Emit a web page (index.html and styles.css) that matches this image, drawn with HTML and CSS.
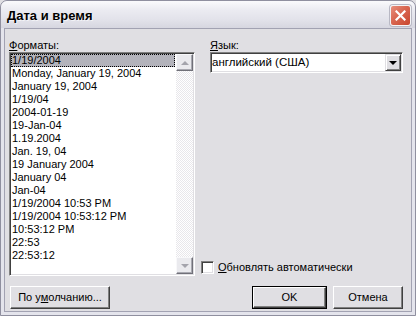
FILE: index.html
```html
<!DOCTYPE html>
<html lang="ru">
<head>
<meta charset="utf-8">
<title>Дата и время</title>
<link rel="stylesheet" href="styles.css">
</head>
<body>
<div class="window">
  <div class="titlebar">
    <span class="title">Дата и время</span>
    <span class="close">
      <svg width="11" height="11" viewBox="0 0 11 11"><path d="M1.5 1.5 L9.5 9.5 M9.5 1.5 L1.5 9.5" stroke="#fff" stroke-width="2.2" stroke-linecap="square" fill="none"/></svg>
    </span>
  </div>
  <div class="client">
    <div class="main">
      <div class="col-left">
        <div class="label"><u>Ф</u>орматы:</div>
        <div class="listbox">
          <ul class="items">
            <li class="selected">1/19/2004</li>
            <li>Monday, January 19, 2004</li>
            <li>January 19, 2004</li>
            <li>1/19/04</li>
            <li>2004-01-19</li>
            <li>19-Jan-04</li>
            <li>1.19.2004</li>
            <li>Jan. 19, 04</li>
            <li>19 January 2004</li>
            <li>January 04</li>
            <li>Jan-04</li>
            <li>1/19/2004 10:53 PM</li>
            <li>1/19/2004 10:53:12 PM</li>
            <li>10:53:12 PM</li>
            <li>22:53</li>
            <li>22:53:12</li>
          </ul>
          <div class="vscroll">
            <div class="sbtn"><span class="tri-up"></span></div>
            <div class="track"></div>
            <div class="sbtn"><span class="tri-down gray"></span></div>
          </div>
        </div>
      </div>
      <div class="col-right">
        <div class="lang">
          <div class="label"><u>Я</u>зык:</div>
          <div class="combo">
            <span class="combo-text">английский (США)</span>
            <span class="combo-btn"><span class="tri-down"></span></span>
          </div>
        </div>
        <div class="check">
          <span class="box"></span>
          <span class="check-text"><u>О</u>бновлять автоматически</span>
        </div>
      </div>
    </div>
    <div class="buttons">
      <div class="btn btn-defaults">По у<u>м</u>олчанию...</div>
      <div class="spacer"></div>
      <div class="btn btn-ok"><span class="btn-ok-inner">OK</span></div>
      <div class="btn btn-cancel">Отмена</div>
    </div>
  </div>
</div>
</body>
</html>
```

FILE: styles.css
```css
html, body {
  margin: 0;
  padding: 0;
  background: #e0dfe3;
}

.window {
  width: 416px;
  height: 316px;
  box-sizing: border-box;
  border: 1px solid #8f8f9f;
  border-radius: 7px 7px 0 0;
  background: #e4e4ec;
  padding: 0 3px 3px 3px;
  display: flex;
  flex-direction: column;
  font-family: "Liberation Sans", Arial, sans-serif;
  font-size: 11px;
  color: #000;
  overflow: hidden;
}

.titlebar {
  height: 27px;
  margin: 0 -3px;
  display: flex;
  align-items: center;
  justify-content: space-between;
  padding: 0 4px 0 6px;
  background: linear-gradient(#fafafc 0%, #ececf2 30%, #e2e2ea 70%, #d6d6e0 100%);
  border-radius: 6px 6px 0 0;
}

.title {
  font-weight: bold;
  font-size: 13px;
  color: #000;
  text-shadow: 1px 1px 0 rgba(255,255,255,0.6);
  padding-top: 1px;
}

.close {
  width: 19px;
  height: 19px;
  border: 1px solid #f4f4f6;
  border-radius: 3px;
  background: linear-gradient(135deg, #e8907e 0%, #da6a55 40%, #c9452d 100%);
  display: flex;
  align-items: center;
  justify-content: center;
  box-shadow: 0 0 0 1px #b8b8c4;
  margin-top: 1px;
}

.client {
  flex: 1;
  background: #e0dfe3;
  border: 1px solid #a2a2b2;
  padding: 10px 8px 2px 4px;
  display: flex;
  flex-direction: column;
}

.main {
  display: flex;
  height: 237px;
}

.label {
  height: 13px;
  line-height: 13px;
}

u {
  text-decoration: underline;
  text-underline-offset: 1px;
}

.col-left {
  width: 186px;
  display: flex;
  flex-direction: column;
}

.listbox {
  width: 186px;
  height: 224px;
  box-sizing: border-box;
  border: 1px solid;
  border-color: #808080 #ffffff #ffffff #808080;
  padding: 1px;
  box-shadow: inset 1px 1px 0 #404040, inset -1px -1px 0 #e0dfe3;
  background: #fff;
  display: flex;
}

.items {
  list-style: none;
  margin: 0;
  padding: 0;
  flex: 1;
  background: #fff;
}

.items li {
  height: 13px;
  line-height: 13px;
  padding-left: 1px;
  white-space: nowrap;
}

.items li.selected {
  background: #b3b3bb;
  outline: 1px dotted #000;
  outline-offset: -1px;
  margin-right: 1px;
}

.vscroll {
  width: 17px;
  display: flex;
  flex-direction: column;
}

.track {
  flex: 1;
  background: repeating-conic-gradient(#e8e7eb 0 25%, #ffffff 0 50%) 0 0 / 2px 2px;
}

.sbtn {
  width: 17px;
  height: 17px;
  box-sizing: border-box;
  background: #eaeaee;
  border: 1px solid;
  border-color: #f8f8fa #707078 #707078 #f8f8fa;
  box-shadow: inset -1px -1px 0 #a8a8b0;
  display: flex;
  align-items: center;
  justify-content: center;
}

.tri-up {
  width: 0;
  height: 0;
  border-left: 4px solid transparent;
  border-right: 4px solid transparent;
  border-bottom: 4px solid #a4a4ac;
}

.tri-down {
  width: 0;
  height: 0;
  border-left: 4px solid transparent;
  border-right: 4px solid transparent;
  border-top: 4px solid #000;
}

.tri-down.gray {
  border-top-color: #a4a4ac;
}

.col-right {
  margin-left: 6px;
  flex: 1;
  display: flex;
  flex-direction: column;
  justify-content: space-between;
  padding-bottom: 2px;
}

.lang {
  margin-left: 9px;
}

.combo {
  height: 21px;
  box-sizing: border-box;
  border: 1px solid;
  border-color: #808080 #ffffff #ffffff #808080;
  padding: 1px;
  box-shadow: inset 1px 1px 0 #404040, inset -1px -1px 0 #e0dfe3;
  background: #fff;
  display: flex;
  align-items: center;
}

.combo-text {
  flex: 1;
  padding-left: 0;
  line-height: 17px;
  font-size: 11.5px;
}

.combo-btn {
  width: 16px;
  height: 17px;
  box-sizing: border-box;
  background: #e0dfe3;
  border: 1px solid;
  border-color: #e0dfe3 #404040 #404040 #e0dfe3;
  box-shadow: inset 1px 1px 0 #ffffff, inset -1px -1px 0 #808080;
  display: flex;
  align-items: center;
  justify-content: center;
}

.check {
  display: flex;
  align-items: center;
  height: 13px;
  gap: 4px;
}

.box {
  width: 13px;
  height: 13px;
  box-sizing: border-box;
  border: 1px solid;
  border-color: #808080 #ffffff #ffffff #808080;
  box-shadow: inset 1px 1px 0 #404040, inset -1px -1px 0 #e0dfe3;
  background: #fff;
}

.check-text {
  line-height: 13px;
}

.buttons {
  display: flex;
  margin-top: 10px;
  height: 23px;
  padding-left: 1px;
}

.spacer {
  flex: 1;
}

.btn {
  height: 23px;
  box-sizing: border-box;
  background: #e0dfe3;
  border: 1px solid;
  border-color: #ffffff #404040 #404040 #ffffff;
  box-shadow: inset -1px -1px 0 #808080;
  display: flex;
  align-items: center;
  justify-content: center;
  line-height: 13px;
}

.btn-defaults {
  width: 100px;
}

.btn-ok {
  width: 75px;
  border: 1px solid #000;
  box-shadow: none;
  padding: 0;
}

.btn-ok-inner {
  flex: 1;
  align-self: stretch;
  display: flex;
  align-items: center;
  justify-content: center;
  border: 1px solid;
  border-color: #ffffff #404040 #404040 #ffffff;
  box-shadow: inset -1px -1px 0 #808080;
}

.btn-cancel {
  width: 70px;
  margin-left: 6px;
}
```
